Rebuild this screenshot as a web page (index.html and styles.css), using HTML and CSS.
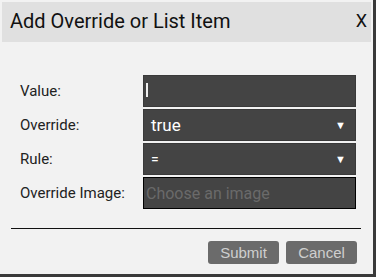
FILE: index.html
```html
<!DOCTYPE html>
<html lang="en">
<head>
    <meta charset="UTF-8">
    <title>Add Override or List Item</title>
    <link rel="stylesheet" href="styles.css">
</head>
<body>
    <div class="dialog">
        <div class="dialog-header">
            <span class="dialog-title">Add Override or List Item</span>
            <span class="dialog-close">X</span>
        </div>

        <div class="dialog-body">
            <div class="form-row">
                <label class="form-label">Value:</label>
                <div class="field"><span class="caret"></span></div>
            </div>
            <div class="form-row">
                <label class="form-label">Override:</label>
                <div class="field select">
                    <span class="select-value">true</span>
                    <span class="select-arrow">&#9660;</span>
                </div>
            </div>
            <div class="form-row">
                <label class="form-label">Rule:</label>
                <div class="field select">
                    <span class="select-value small">=</span>
                    <span class="select-arrow">&#9660;</span>
                </div>
            </div>
            <div class="form-row">
                <label class="form-label">Override Image:</label>
                <div class="field file">Choose an image</div>
            </div>
        </div>

        <hr class="divider">

        <div class="dialog-footer">
            <button class="btn">Submit</button>
            <button class="btn">Cancel</button>
        </div>
    </div>
</body>
</html>
```

FILE: styles.css
```css
* {
    margin: 0;
    padding: 0;
    box-sizing: border-box;
}

body {
    background: #3a3a3a;
    font-family: Roboto, 'Liberation Sans', sans-serif;
}

.dialog {
    width: 373px;
    height: 274px;
    background: #f2f2f2;
    padding: 2px;
}

.dialog-header {
    height: 40px;
    width: 369px;
    background: #e0e0e0;
    display: flex;
    align-items: center;
    justify-content: space-between;
    padding: 0 4px 2px 8px;
}

.dialog-title {
    font-size: 20px;
    color: #111;
}

.dialog-close {
    font-size: 18px;
    color: #111;
    margin-bottom: 2px;
}

.dialog-body {
    padding: 33px 0 0 18px;
    display: flex;
    flex-direction: column;
    gap: 2px;
}

.form-row {
    display: flex;
    align-items: center;
    height: 32px;
}

.form-label {
    width: 123px;
    font-size: 15px;
    color: #222;
}

.field {
    width: 213px;
    height: 32px;
    background: #444;
    border: 1px solid #3a3a3a;
    display: flex;
    align-items: center;
    color: #fff;
}

.caret {
    width: 2px;
    height: 14px;
    background: #f0f0f0;
    margin: 0 0 2px 2px;
}

.select {
    justify-content: space-between;
    padding: 0 9px 0 7px;
}

.select-value {
    font-size: 17px;
}

.select-value.small {
    font-size: 14px;
}

.select-arrow {
    font-size: 11px;
}

.file {
    border-color: #000;
    font-size: 16px;
    color: #6a6a6a;
    padding-left: 2px;
}

.divider {
    border: none;
    border-top: 1px solid #111;
    margin: 19px 10px 0 9px;
}

.dialog-footer {
    display: flex;
    justify-content: flex-end;
    gap: 7px;
    padding: 12px 14px 0 0;
}

.btn {
    width: 71px;
    height: 23px;
    border: none;
    border-radius: 3px;
    background: #6b6b6b;
    color: #cfcfcf;
    font-family: 'Liberation Sans', Arial, sans-serif;
    font-size: 15px;
}
```
